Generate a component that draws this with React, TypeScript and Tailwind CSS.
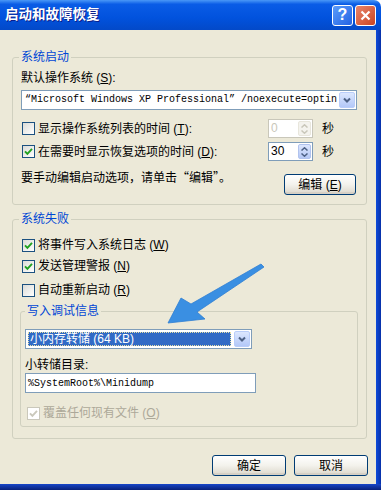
import React from 'react';

const ui = "font-['Liberation_Sans','Noto_Sans_CJK_SC',sans-serif]";
const cjk = "font-['Noto_Sans_CJK_SC',sans-serif]";
const mono = "font-['Liberation_Mono','Noto_Sans_CJK_SC',monospace]";

const Check: React.FC<{ checked?: boolean; disabled?: boolean }> = ({ checked, disabled }) => (
  <span
    className={`flex h-[13px] w-[13px] shrink-0 items-center justify-center border ${
      disabled ? 'border-[#CAC8BB] bg-white' : 'border-[#1C5180] bg-linear-to-br from-[#DCDCD7] to-white'
    }`}
  >
    {checked && (
      <svg width="9" height="9" viewBox="0 0 9 9">
        <path d="M1 4.3 L3.4 6.8 L8 1.8" fill="none" stroke={disabled ? '#CAC8BB' : '#21A121'} strokeWidth="1.9" />
      </svg>
    )}
  </span>
);

const Spin: React.FC<{ value: string; disabled?: boolean }> = ({ value, disabled }) => (
  <div className={`flex h-[19px] w-[45px] border bg-white ${disabled ? 'border-[#C9C7BA]' : 'border-[#7F9DB9]'}`}>
    <span className={`flex-1 pl-[2px] text-[12px] leading-[17px] ${disabled ? 'text-[#C9C7BA]' : 'text-black'}`}>{value}</span>
    <div
      className={`m-px flex w-[13px] flex-col items-center justify-center gap-[2px] rounded-[2px] border ${
        disabled ? 'border-[#E8E6DC] bg-[#F4F3EE]' : 'border-[#B1C3EE] bg-linear-to-b from-[#DCE6FD] to-[#B5C8F5]'
      }`}
    >
      <svg width="7" height="4" viewBox="0 0 7 4">
        <path d="M0.5 3.5 L3.5 0.8 L6.5 3.5" fill="none" stroke={disabled ? '#C9C7BA' : '#4D6185'} strokeWidth="1.5" />
      </svg>
      <svg width="7" height="4" viewBox="0 0 7 4">
        <path d="M0.5 0.5 L3.5 3.2 L6.5 0.5" fill="none" stroke={disabled ? '#C9C7BA' : '#4D6185'} strokeWidth="1.5" />
      </svg>
    </div>
  </div>
);

const ComboBtn: React.FC = () => (
  <div className="m-px flex w-[16px] shrink-0 items-center justify-center rounded-[2px] border border-[#B9CDF9] bg-linear-to-b from-[#DCE7FE] to-[#B3C8F8]">
    <svg width="8" height="6" viewBox="0 0 8 6">
      <path d="M1 1.5 L4 4.5 L7 1.5" fill="none" stroke="#4D6185" strokeWidth="2" />
    </svg>
  </div>
);

const Btn: React.FC<{ className?: string; children: React.ReactNode }> = ({ className = '', children }) => (
  <button
    type="button"
    className={`flex h-[21px] items-center justify-center rounded-[3px] border border-[#003C74] bg-linear-to-b from-white via-[#F3F2EC] to-[#DCD7CB] text-[12px] text-black shadow-[inset_0_-2px_0_#D6D0C5] ${className}`}
  >
    {children}
  </button>
);

const CheckRow: React.FC<{ checked?: boolean; disabled?: boolean; className?: string; children: React.ReactNode }> = ({
  checked,
  disabled,
  className = '',
  children,
}) => (
  <div className={`flex h-4 items-center ${className}`}>
    <Check checked={checked} disabled={disabled} />
    <span className={`ml-[3px] leading-4 ${disabled ? 'text-[#ACA899]' : ''}`}>{children}</span>
  </div>
);

export default function App() {
  return (
    <div className={`relative flex h-[490px] w-[381px] flex-col overflow-hidden bg-white text-[12px] text-black ${ui}`}>
      {/* Title bar */}
      <div className="flex h-[30px] shrink-0 items-center rounded-tr-[7px] bg-[linear-gradient(180deg,#4a98f7_0%,#0a5ce6_14%,#0152dd_60%,#0349c8_100%)] pl-[5px] pr-[5px]">
        <span className="text-[13.5px] font-bold text-white [text-shadow:1px_1px_#0A1E8C]">启动和故障恢复</span>
        <div className="ml-auto flex gap-[2px]">
          <div className="flex h-[21px] w-[21px] items-center justify-center rounded-[3px] border border-white bg-linear-to-br from-[#5B9CFB] to-[#2462E3] text-[16px] font-bold leading-none text-white">
            ?
          </div>
          <div className="flex h-[21px] w-[21px] items-center justify-center rounded-[3px] border border-white bg-linear-to-br from-[#E9856B] to-[#C8431F]">
            <svg width="11" height="11" viewBox="0 0 11 11">
              <path d="M1.5 1.5 L9.5 9.5 M9.5 1.5 L1.5 9.5" stroke="white" strokeWidth="2.2" />
            </svg>
          </div>
        </div>
      </div>

      <div className="flex flex-1">
        {/* Client area */}
        <div className="flex flex-1 flex-col bg-[#ECE9D8]">
          {/* 系统启动 */}
          <fieldset className="ml-[12px] mt-[19px] w-[355px] rounded-[3px] border border-[#D0D0BF] pb-[9px] pl-[8px] pr-[8px]">
            <legend className="-ml-[2px] px-[2px] leading-4 text-[#0046D5]">系统启动</legend>
            <div className="mt-[5px] leading-4">
              默认操作系统 (<span className="underline">S</span>):
            </div>
            <div className="mt-[4px] flex h-[20px] w-[336px] border border-[#7F9DB9] bg-white">
              <span className={`${mono} flex-1 overflow-hidden whitespace-nowrap pl-[3px] text-[10px] leading-[18px]`}>
                “Microsoft Windows XP Professional” /noexecute=optin
              </span>
              <ComboBtn />
            </div>
            <div className="mt-[9px] flex h-[19px] items-center">
              <div className="flex w-[247px] items-center pl-px">
                <Check />
                <span className="ml-[3px]">
                  显示操作系统列表的时间 (<span className="underline">T</span>):
                </span>
              </div>
              <Spin value="0" disabled />
              <span className="ml-[9px]">秒</span>
            </div>
            <div className="mt-[4px] flex h-[19px] items-center">
              <div className="flex w-[247px] items-center pl-px">
                <Check checked />
                <span className="ml-[3px]">
                  在需要时显示恢复选项的时间 (<span className="underline">D</span>):
                </span>
              </div>
              <Spin value="30" />
              <span className="ml-[9px]">秒</span>
            </div>
            <div className="mt-[8px] flex items-start">
              <span className={`${cjk} leading-4`}>要手动编辑启动选项，请单击“编辑”。</span>
              <Btn className="ml-auto mr-[2px] mt-[5px] h-[20px] w-[72px]">
                编辑 (<span className="underline">E</span>)
              </Btn>
            </div>
          </fieldset>

          {/* 系统失败 */}
          <fieldset className="ml-[12px] mt-[6px] w-[355px] rounded-[3px] border border-[#D0D0BF] pb-[11px] pl-[7px] pr-[8px]">
            <legend className="-ml-px px-[2px] leading-4 text-[#0046D5]">系统失败</legend>
            <CheckRow checked className="ml-[2px] mt-[10px]">
              将事件写入系统日志 (<span className="underline">W</span>)
            </CheckRow>
            <CheckRow checked className="ml-[2px] mt-[5px]">
              发送管理警报 (<span className="underline">N</span>)
            </CheckRow>
            <CheckRow className="ml-[2px] mt-[8px]">
              自动重新启动 (<span className="underline">R</span>)
            </CheckRow>

            <fieldset className="mt-[5px] w-[338px] rounded-[3px] border border-[#D0D0BF] pb-[5px] pl-[4px]">
              <legend className="px-[2px] leading-4 text-[#0046D5]">写入调试信息</legend>
              <div className="mt-[10px] flex h-[20px] w-[227px] border border-[#7F9DB9] bg-white">
                <div className="m-[2px] flex flex-1 items-center border border-dotted border-[#E6DFA6] bg-[#316AC5] pl-px text-white">
                  小内存转储 (64 KB)
                </div>
                <ComboBtn />
              </div>
              <div className="mt-[8px] leading-4">小转储目录:</div>
              <div className="flex h-[20px] w-[231px] items-center border border-[#7F9DB9] bg-white pl-[2px]">
                <span className={`${mono} text-[10px]`}>%SystemRoot%\Minidump</span>
              </div>
              <CheckRow checked disabled className="ml-[2px] mt-[12px]">
                覆盖任何现有文件 (<span className="underline">O</span>)
              </CheckRow>
            </fieldset>
          </fieldset>

          <div className="mt-[16px] flex justify-end gap-[8px] pr-[8px]">
            <Btn className="w-[74px]">确定</Btn>
            <Btn className="w-[74px]">取消</Btn>
          </div>
        </div>
        {/* Right frame */}
        <div className="w-[5px] bg-linear-to-r from-[#0D4BDB] to-[#0831A8]" />
      </div>
      {/* Bottom frame */}
      <div className="h-[6px] shrink-0 bg-linear-to-b from-[#1746C8] to-[#08207A]" />

      {/* Annotation arrow */}
      <svg className="pointer-events-none absolute left-0 top-0" width="381" height="490" viewBox="0 0 381 490">
        <polygon
          points="168,323 181,298 191,304 261,264 264,267 197,312 205,319"
          fill="#3A8FE2"
          stroke="#2F7FD3"
          strokeWidth="0.8"
          strokeLinejoin="round"
        />
      </svg>
    </div>
  );
}
